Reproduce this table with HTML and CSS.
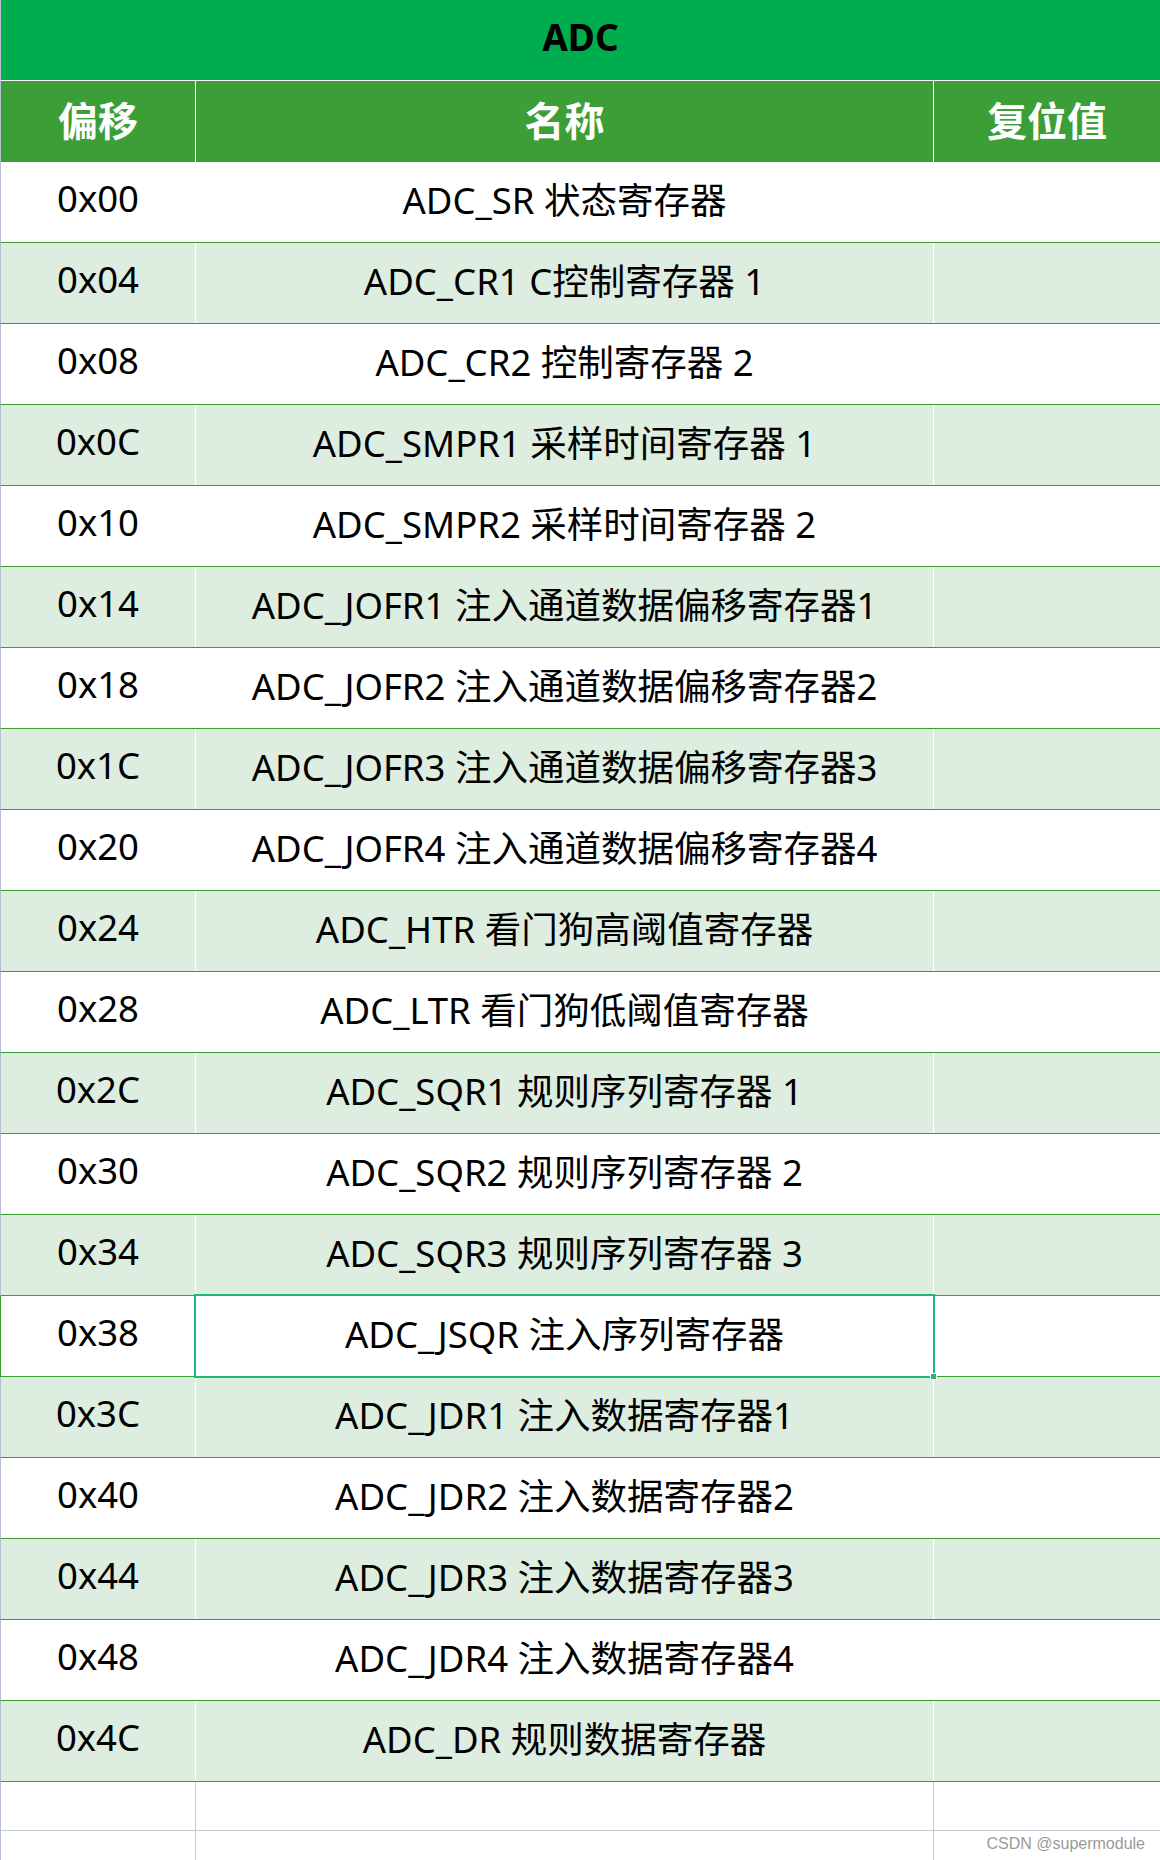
FILE: index.html
```html
<!DOCTYPE html>
<html lang="zh-CN">
<head>
<meta charset="utf-8">
<title>ADC</title>
<link rel="stylesheet" href="styles.css">
</head>
<body>
<div class="sheet">
  <div class="title-row">ADC</div>
  <div class="row head">
    <div class="cell c1">偏移</div>
    <div class="cell c2">名称</div>
    <div class="cell c3">复位值</div>
  </div>
  <div class="row"><div class="cell c1">0x00</div><div class="cell c2">ADC_SR 状态寄存器</div><div class="cell c3"></div></div>
  <div class="row alt"><div class="cell c1">0x04</div><div class="cell c2">ADC_CR1 C控制寄存器 1</div><div class="cell c3"></div></div>
  <div class="row"><div class="cell c1">0x08</div><div class="cell c2">ADC_CR2 控制寄存器 2</div><div class="cell c3"></div></div>
  <div class="row alt"><div class="cell c1">0x0C</div><div class="cell c2">ADC_SMPR1 采样时间寄存器 1</div><div class="cell c3"></div></div>
  <div class="row"><div class="cell c1">0x10</div><div class="cell c2">ADC_SMPR2 采样时间寄存器 2</div><div class="cell c3"></div></div>
  <div class="row alt"><div class="cell c1">0x14</div><div class="cell c2">ADC_JOFR1 注入通道数据偏移寄存器1</div><div class="cell c3"></div></div>
  <div class="row"><div class="cell c1">0x18</div><div class="cell c2">ADC_JOFR2 注入通道数据偏移寄存器2</div><div class="cell c3"></div></div>
  <div class="row alt"><div class="cell c1">0x1C</div><div class="cell c2">ADC_JOFR3 注入通道数据偏移寄存器3</div><div class="cell c3"></div></div>
  <div class="row"><div class="cell c1">0x20</div><div class="cell c2">ADC_JOFR4 注入通道数据偏移寄存器4</div><div class="cell c3"></div></div>
  <div class="row alt"><div class="cell c1">0x24</div><div class="cell c2">ADC_HTR 看门狗高阈值寄存器</div><div class="cell c3"></div></div>
  <div class="row"><div class="cell c1">0x28</div><div class="cell c2">ADC_LTR 看门狗低阈值寄存器</div><div class="cell c3"></div></div>
  <div class="row alt"><div class="cell c1">0x2C</div><div class="cell c2">ADC_SQR1 规则序列寄存器 1</div><div class="cell c3"></div></div>
  <div class="row"><div class="cell c1">0x30</div><div class="cell c2">ADC_SQR2 规则序列寄存器 2</div><div class="cell c3"></div></div>
  <div class="row alt"><div class="cell c1">0x34</div><div class="cell c2">ADC_SQR3 规则序列寄存器 3</div><div class="cell c3"></div></div>
  <div class="row sel"><div class="cell c1">0x38</div><div class="cell c2 selected">ADC_JSQR 注入序列寄存器</div><div class="cell c3"></div></div>
  <div class="row alt"><div class="cell c1">0x3C</div><div class="cell c2">ADC_JDR1 注入数据寄存器1</div><div class="cell c3"></div></div>
  <div class="row"><div class="cell c1">0x40</div><div class="cell c2">ADC_JDR2 注入数据寄存器2</div><div class="cell c3"></div></div>
  <div class="row alt"><div class="cell c1">0x44</div><div class="cell c2">ADC_JDR3 注入数据寄存器3</div><div class="cell c3"></div></div>
  <div class="row"><div class="cell c1">0x48</div><div class="cell c2">ADC_JDR4 注入数据寄存器4</div><div class="cell c3"></div></div>
  <div class="row alt"><div class="cell c1">0x4C</div><div class="cell c2">ADC_DR 规则数据寄存器</div><div class="cell c3"></div></div>
  <div class="row empty"><div class="cell c1"></div><div class="cell c2"></div><div class="cell c3"></div></div>
  <div class="row empty last"><div class="cell c1"></div><div class="cell c2"></div><div class="cell c3"></div></div>
  <div class="watermark">CSDN @supermodule</div>
</div>
</body>
</html>
```
FILE: styles.css
```css
html, body {
  margin: 0;
  padding: 0;
  background: #ffffff;
}
body {
  width: 1160px;
  height: 1860px;
  overflow: hidden;
  font-family: "Noto Sans", "Noto Sans CJK SC", sans-serif;
  color: #000;
}
.sheet {
  position: relative;
  width: 1160px;
  height: 1860px;
}
.title-row {
  height: 80px;
  line-height: 74px;
  background: #00ad4e;
  border-bottom: 1px solid #ffffff;
  border-left: 1px solid #b4bed4;
  text-align: center;
  font-size: 37px;
  font-weight: 700;
}
.row {
  display: grid;
  grid-template-columns: 195px 738px 1fr;
  height: 81px;
  box-sizing: border-box;
  border-left: 1px solid #b4bed4;
  border-bottom: 1px solid #3a9f30;
  background: #ffffff;
}
.row.alt {
  background: #ddede0;
}
.row.head {
  background: #3c9e36;
  border-bottom: none;
  color: #ffffff;
}
.row.sel {
  border-left-color: #3a9f30;
}
.cell {
  box-sizing: border-box;
  display: flex;
  align-items: center;
  justify-content: center;
  font-size: 36.5px;
  white-space: nowrap;
  padding-bottom: 8px;
}
.c1, .c2 {
  border-right: 1px solid #ffffff;
}
.head .cell {
  font-size: 40px;
  font-weight: 700;
  padding-bottom: 6px;
}
.selected {
  position: relative;
}
.selected::after {
  content: "";
  position: absolute;
  left: -2px;
  top: -2px;
  right: -2px;
  bottom: -2px;
  border: 2px solid #21b876;
}
.selected::before {
  content: "";
  position: absolute;
  right: -4px;
  bottom: -4px;
  width: 5px;
  height: 5px;
  background: #21b876;
  border: 1px solid #ffffff;
  z-index: 2;
}
.row.empty {
  height: 49px;
  border-bottom: 1px solid #c3cad8;
}
.row.empty .c1, .row.empty .c2 {
  border-right: 1px solid #c3cad8;
}
.row.empty.last {
  height: 30px;
  border-bottom: none;
}
.watermark {
  position: absolute;
  right: 15px;
  bottom: 7px;
  font-family: "Liberation Sans", Arial, sans-serif;
  font-size: 16px;
  color: #9a9a9a;
  text-shadow: 0 0 1px #ffffff;
}
```
